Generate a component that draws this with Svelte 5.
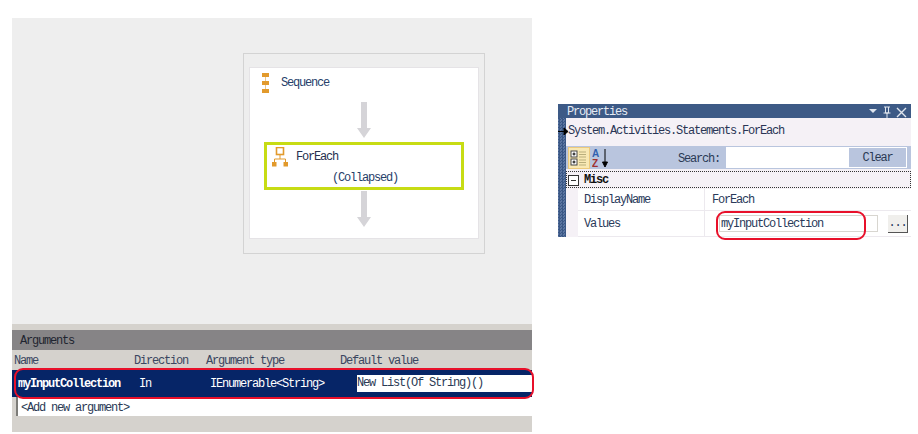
<script>
    const columns = [
        { label: "Name", width: 120 },
        { label: "Direction", width: 72 },
        { label: "Argument type", width: 134 },
        { label: "Default value", width: 190 }
    ];
</script>

<div class="page">
    <div class="workflow">
        <div class="designer">
            <div class="frame">
                <div class="sequence">
                    <div class="activityTitle">
                        <svg class="seqIcon" width="7" height="21" viewBox="0 0 7 21">
                            <rect x="0" y="0" width="7" height="4" fill="#e29a2c" />
                            <rect x="0" y="8" width="7" height="4" fill="#e29a2c" />
                            <rect x="0" y="16" width="7" height="4" fill="#e29a2c" />
                            <path d="M3.5 4V8M3.5 12V16" stroke="#eec88c" stroke-width="1" />
                        </svg>
                        <span>Sequence</span>
                    </div>
                    <svg class="arrow" width="14" height="36" viewBox="0 0 14 36">
                        <path d="M4 0H10V26H14L7 36L0 26H4Z" fill="#d5d4d8" />
                    </svg>
                    <div class="forEach">
                        <div class="forEachTitle">
                            <svg width="16" height="20" viewBox="0 0 16 20">
                                <rect x="4.5" y="0.5" width="7" height="7" fill="#fff" stroke="#e29a2c" stroke-width="1.6" />
                                <path d="M8 8V12M2.5 15V12H13.5V15" fill="none" stroke="#e29a2c" />
                                <rect x="0" y="15" width="4.5" height="4.5" fill="#e29a2c" />
                                <rect x="11.5" y="15" width="4.5" height="4.5" fill="#e29a2c" />
                            </svg>
                            <span>ForEach</span>
                        </div>
                        <div class="collapsed">(Collapsed)</div>
                    </div>
                    <svg class="arrow second" width="14" height="36" viewBox="0 0 14 36">
                        <path d="M4 0H10V26H14L7 36L0 26H4Z" fill="#d5d4d8" />
                    </svg>
                </div>
            </div>
        </div>

        <div class="arguments">
            <div class="argsHeader">Arguments</div>
            <div class="argsColumns">
                {#each columns as col}
                    <span style="width: {col.width}px">{col.label}</span>
                {/each}
            </div>
            <div class="argRow">
                <span class="name">myInputCollection</span>
                <span class="dir">In</span>
                <span class="type">IEnumerable&lt;String&gt;</span>
                <span class="value">New List(Of String)()</span>
                <div class="redMark"></div>
            </div>
            <div class="addRow">&lt;Add new argument&gt;</div>
        </div>
    </div>

    <div class="properties">
        <div class="propsTitle">
            <span>Properties</span>
            <svg width="40" height="12" viewBox="0 0 40 12">
                <path d="M0 3H8L4 7Z" fill="#dfe5ee" />
                <path d="M15 1H21M16.5 1V7H19.5V1M14.5 7H21.5M18 7V12" fill="none" stroke="#dfe5ee" />
                <path d="M28 2L37 11M37 2L28 11" stroke="#dfe5ee" stroke-width="1.4" />
            </svg>
        </div>
        <div class="propsBody">
            <div class="typeName">System.Activities.Statements.ForEach</div>
            <svg class="cursor" width="11" height="9" viewBox="0 0 11 9">
                <path d="M0 4.5H7M6 1L10 4.5L6 8Z" fill="#000" stroke="#000" />
            </svg>
            <div class="toolbar">
                <div class="sortBtn">
                    <svg width="20" height="20" viewBox="0 0 20 20">
                        <rect x="2" y="3" width="6" height="6" fill="#fff" stroke="#444" />
                        <rect x="2" y="11" width="6" height="6" fill="#fff" stroke="#444" />
                        <path d="M3.5 6H6.5M5 4.5V7.5M3.5 14H6.5M5 12.500V15.500" stroke="#000" />
                        <path d="M10 4H17M10 6.500H17M10 9H17M10 12H17M10 14.500H17M10 17H17" stroke="#b9ae7c" />
                    </svg>
                </div>
                <svg class="azIcon" width="18" height="20" viewBox="0 0 18 20">
                    <text x="0" y="9" class="azA">A</text>
                    <text x="0" y="19" class="azZ">Z</text>
                    <path d="M13 1V16M10.500 14L13 19L15.500 14Z" fill="#000" stroke="#000" />
                </svg>
                <span class="searchLabel">Search:</span>
                <div class="searchBox"></div>
                <div class="clearBtn">Clear</div>
            </div>
            <div class="miscRow">
                <span class="minus"></span>
                <b>Misc</b>
            </div>
            <div class="propRow first">
                <span class="propName">DisplayName</span>
                <span class="propVal">ForEach</span>
            </div>
            <div class="propRow last">
                <span class="propName">Values</span>
                <div class="valueCell">
                    <div class="valueInput">myInputCollection</div>
                    <div class="moreBtn">...</div>
                </div>
                <div class="redOval"></div>
            </div>
        </div>
    </div>
</div>

<style>
    :global(body) {
        margin: 0;
        background: #fff;
    }

    .page {
        display: flex;
        align-items: flex-start;
        width: 918px;
        height: 434px;
        padding: 18px 0 0 12px;
        box-sizing: border-box;
        overflow: hidden;
        font-family: "Liberation Mono", "DejaVu Sans Mono", monospace;
        font-size: 12px;
        letter-spacing: -1.2px;
        color: #2b3a55;
    }

    .workflow {
        width: 520px;
        flex: none;
    }

    .designer {
        height: 306px;
        padding: 35px 0 0 231px;
        box-sizing: border-box;
        background: #eeeeee;
    }

    .frame {
        width: 242px;
        height: 201px;
        padding: 13px 5px 0;
        box-sizing: border-box;
        border: 1px solid #d3d3d3;
    }

    .sequence {
        display: flex;
        flex-direction: column;
        align-items: center;
        height: 172px;
        box-sizing: border-box;
        border: 1px solid #e5e3e6;
        background: #fff;
    }

    .activityTitle {
        display: flex;
        align-items: center;
        align-self: flex-start;
        height: 27px;
        padding: 3px 0 0 12px;
        box-sizing: border-box;
        color: #27406a;
    }

    .seqIcon {
        margin-right: 12px;
    }

    .arrow {
        margin-top: 7px;
        flex: none;
    }

    .arrow.second {
        margin-top: 1px;
    }

    .forEach {
        width: 200px;
        height: 48px;
        margin-top: 4px;
        padding: 2px 0 0 5px;
        box-sizing: border-box;
        border: 3px solid #c7dc14;
        color: #27304f;
    }

    .forEachTitle {
        display: flex;
        align-items: center;
        gap: 8px;
    }

    .collapsed {
        margin-top: 4px;
        padding-left: 60px;
        color: #27406a;
    }

    .arguments {
        padding-top: 6px;
        height: 108px;
        box-sizing: border-box;
        background: #d5d2cd;
    }

    .argsHeader {
        height: 20px;
        line-height: 22px;
        padding-left: 8px;
        background: #868486;
        color: #1f2430;
    }

    .argsColumns {
        display: flex;
        height: 20px;
        line-height: 22px;
        padding-left: 2px;
        color: #3a4660;
    }

    .argRow {
        position: relative;
        display: flex;
        align-items: center;
        height: 27px;
        background: #062567;
        color: #fff;
    }

    .argRow span {
        flex: none;
    }

    .name {
        width: 127px;
        padding-left: 6px;
        box-sizing: border-box;
        font-weight: bold;
    }

    .dir {
        width: 71px;
    }

    .type {
        width: 147px;
    }

    .value {
        width: 175px;
        height: 17px;
        line-height: 17px;
        background: #fff;
        color: #2b3a55;
    }

    .redMark {
        position: absolute;
        left: 2px;
        right: -2px;
        top: -2px;
        bottom: -2px;
        border: 2px solid #e8102a;
        border-radius: 9px;
    }

    .addRow {
        height: 19px;
        line-height: 23px;
        margin-left: 4px;
        padding-left: 3px;
        border-left: 2px solid #7d7c78;
        background: #fff;
        color: #2b3a55;
    }

    .properties {
        width: 353px;
        margin: 86px 0 0 26px;
        flex: none;
        background: repeating-conic-gradient(#3a5785 0 25%, #5b75a1 0 50%) 0 0 / 3px 3px;
    }

    .propsTitle {
        display: flex;
        justify-content: space-between;
        align-items: center;
        height: 14px;
        padding: 1px 2px 0 9px;
        box-sizing: border-box;
        background: #3d5a86;
        color: #e6ebf3;
    }

    .propsBody {
        position: relative;
        margin-left: 8px;
        background: #f5f1f6;
    }

    .typeName {
        height: 28px;
        line-height: 26px;
        padding-left: 2px;
        color: #2a3555;
    }

    .cursor {
        position: absolute;
        left: -8px;
        top: 9px;
    }

    .toolbar {
        display: flex;
        align-items: center;
        height: 23px;
        margin-bottom: 2px;
        padding-left: 2px;
        background: #b9c5de;
    }

    .sortBtn {
        display: flex;
        width: 20px;
        height: 20px;
        margin-right: 2px;
        background: #f8e8b4;
        border: 1px solid #ecc97c;
    }

    .azIcon {
        flex: none;
    }

    .azA {
        font: bold 10px "Liberation Sans", sans-serif;
        fill: #3060b0;
    }

    .azZ {
        font: bold 10px "Liberation Sans", sans-serif;
        fill: #a03030;
    }

    .searchLabel {
        margin-left: 68px;
        padding-top: 2px;
    }

    .searchBox {
        width: 122px;
        height: 21px;
        margin-left: 6px;
        background: #fff;
    }

    .clearBtn {
        width: 57px;
        height: 19px;
        line-height: 21px;
        text-align: center;
        border: 1px solid #fff;
        background: #b9c5de;
    }

    .miscRow {
        display: flex;
        align-items: center;
        gap: 3px;
        height: 17px;
        border: 1px dotted #333;
        padding: 1px 0 0 1px;
        box-sizing: border-box;
        color: #111;
    }

    .minus {
        width: 9px;
        height: 9px;
        margin-right: 2px;
        border: 1px solid #333;
        background: linear-gradient(#333, #333) center / 5px 1px no-repeat #fff;
    }

    .propRow {
        position: relative;
        display: flex;
        align-items: center;
        margin-left: 12px;
        border-bottom: 1px solid #ece9ee;
        background: #fff;
        color: #2a3a5a;
    }

    .propRow.first {
        height: 21px;
        margin-top: 1px;
    }

    .propRow.last {
        height: 25px;
    }

    .propName {
        width: 127px;
        height: 100%;
        line-height: 22px;
        padding-left: 6px;
        box-sizing: border-box;
        border-right: 1px solid #ece9ee;
    }

    .last .propName {
        line-height: 26px;
    }

    .propVal {
        padding-left: 7px;
    }

    .valueCell {
        display: flex;
        align-items: center;
    }

    .valueInput {
        width: 156px;
        height: 15px;
        line-height: 17px;
        margin-left: 14px;
        padding-left: 1px;
        border: 1px solid #d8d6d0;
    }

    .moreBtn {
        width: 19px;
        height: 17px;
        line-height: 17px;
        margin-left: 10px;
        text-align: center;
        border-right: 1px solid #555;
        border-bottom: 1px solid #555;
        background: #f0efec;
    }

    .redOval {
        position: absolute;
        left: 138px;
        top: 0;
        width: 146px;
        height: 25px;
        border: 2px solid #e8102a;
        border-radius: 9px;
    }
</style>
